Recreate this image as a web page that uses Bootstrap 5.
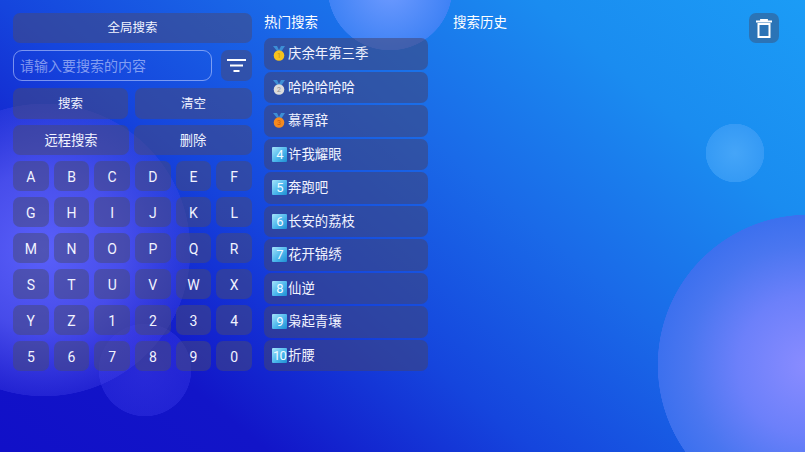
<!DOCTYPE html>
<html lang="zh">

<head>
    <meta charset="utf-8">
    <title>全局搜索</title>
    <link rel="stylesheet" href="https://cdn.jsdelivr.net/npm/bootstrap@5.3.0/dist/css/bootstrap.min.css">
    <style>
        html, body { height: 100%; }

        body {
            overflow: hidden;
            font-family: Roboto, "Noto Sans CJK SC", sans-serif;
            color: #fff;
            background:
                radial-gradient(circle at 808px 365px, #8a8cff 0, #6c80fa 70px, #4a76f0 120px, #3c70ee 150px, transparent 150.5px) 0 0 no-repeat,
                radial-gradient(circle at 735px 153px, #45a5f8 0, #359af5 29px, transparent 29.5px) 0 0 no-repeat,
                radial-gradient(circle at 390px -12px, #6f9bff 0, #3f82f5 62px, transparent 62.5px) 0 0 no-repeat,
                radial-gradient(circle at 145px 370px, rgba(75, 75, 240, .4) 0, rgba(70, 70, 240, .3) 46px, transparent 46.5px) 0 0 no-repeat,
                radial-gradient(circle at 44px 250px, #5a60fa 0, rgba(80, 85, 240, .85) 80px, rgba(75, 75, 235, .3) 146px, transparent 146.5px) 0 0 no-repeat,
                linear-gradient(40deg, #1110c8 0%, #1215c8 20%, #1545dd 40%, #1a6ae8 60%, #1a8cf0 80%, #1b9cf6 100%);
        }

        .page-wrap {
            width: 805px;
            height: 452px;
            padding: 13px 26px 0 13px;
        }

        .left-col { width: 239px; margin-right: 12px; }
        .hot-col { width: 164px; margin-right: 25px; }

        .glass-btn {
            --bs-btn-color: #f1f3ff;
            --bs-btn-hover-color: #f1f3ff;
            --bs-btn-bg: rgba(70, 72, 118, .52);
            --bs-btn-hover-bg: rgba(70, 72, 118, .52);
            --bs-btn-border-width: 0;
            --bs-btn-border-radius: 7px;
            --bs-btn-font-size: 12.5px;
            --bs-btn-padding-x: 0;
            --bs-btn-padding-y: 0;
            --bs-btn-line-height: 1;
            display: flex;
            align-items: center;
            justify-content: center;
            padding-top: 1px;
        }

        .top-btn { height: 30px; }
        .input-row { margin-top: 7px; }
        .btn-row-a {
            display: grid;
            grid-template-columns: 115px 117px;
            column-gap: 7px;
            height: 31px;
            margin-top: 7px;
        }

        .btn-row-b {
            display: grid;
            grid-template-columns: 116px 118px;
            column-gap: 5px;
            height: 30px;
            margin-top: 6px;
        }

        .btn-row-b .btn { --bs-btn-font-size: 13.3px; }

        .search-input {
            width: 199px;
            height: 31px;
            padding: 0 6px;
            font-size: 14px;
            color: #fff;
            background: transparent;
            border: 1px solid rgba(190, 205, 255, .6);
            border-radius: 9px;
        }

        .search-input::placeholder { color: rgba(205, 215, 255, .6); }

        .filter-btn { width: 31px; height: 31px; padding-top: 0; }

        .key-grid {
            display: grid;
            grid-template-columns: repeat(6, 1fr);
            grid-auto-rows: 30px;
            column-gap: 5px;
            row-gap: 6px;
            margin-top: 6px;
        }

        .key-grid .btn { --bs-btn-font-size: 14px; }

        .section-title { font-size: 13.5px; line-height: 18px; height: 18px; }

        .hot-list { margin-top: 7px; display: flex; flex-direction: column; gap: 2px; }

        .hot-item {
            height: 31.5px;
            display: flex;
            align-items: center;
            padding-left: 7px;
            font-size: 13.4px;
            line-height: 1;
            color: #f1f3ff;
            border-radius: 7px;
            background: rgba(66, 68, 115, .55);
        }

        .rank-icon { width: 16px; height: 15px; flex: none; margin-right: 1px; }

        .keycap {
            width: 15px;
            height: 15px;
            flex: none;
            margin-left: 1px;
            margin-right: 1px;
            display: flex;
            align-items: center;
            justify-content: center;
            font-size: 13px;
            letter-spacing: -.8px;
            color: #f2faff;
            background: linear-gradient(135deg, #a6e4fa, #4bb6ec 55%, #1f8fd2);
            border-radius: 1px;
        }

        .history-col { flex-grow: 1; }

        .trash-btn { width: 30px; height: 30px; background: rgba(60, 80, 120, .5); border-radius: 7px; }
    </style>
</head>

<body>
    <div class="page-wrap d-flex align-items-start">
        <!-- left: search and keyboard -->
        <div class="left-col d-flex flex-column">
            <button class="btn glass-btn top-btn w-100" type="button">全局搜索</button>
            <div class="input-row d-flex justify-content-between">
                <input class="search-input" type="text" placeholder="请输入要搜索的内容">
                <button class="btn glass-btn filter-btn" type="button" aria-label="筛选">
                    <svg width="19" height="13" viewBox="0 0 19 13">
                        <path d="M0 1h19M3 6.500h13M6.500 12h6" stroke="#fff" stroke-width="2" fill="none" />
                    </svg>
                </button>
            </div>
            <div class="btn-row-a">
                <button class="btn glass-btn" type="button">搜索</button>
                <button class="btn glass-btn" type="button">清空</button>
            </div>
            <div class="btn-row-b">
                <button class="btn glass-btn" type="button">远程搜索</button>
                <button class="btn glass-btn" type="button">删除</button>
            </div>
            <div class="key-grid" id="keys"></div>
        </div>

        <!-- middle: hot searches -->
        <div class="hot-col">
            <div class="section-title">热门搜索</div>
            <div class="hot-list" id="hotList"></div>
        </div>

        <!-- history -->
        <div class="history-col">
            <div class="section-title">搜索历史</div>
        </div>

        <button class="btn trash-btn p-0 d-flex align-items-center justify-content-center flex-shrink-0" type="button" aria-label="删除">
            <svg width="16" height="19" viewBox="0 0 16 19">
                <path d="M0 2.500h16M5 2V0.800h6V2" stroke="#fff" stroke-width="1.800" fill="none" />
                <rect x="2.500" y="5" width="11" height="13" stroke="#fff" stroke-width="2" fill="none" />
            </svg>
        </button>
    </div>

    <script src="https://cdn.jsdelivr.net/npm/bootstrap@5.3.0/dist/js/bootstrap.bundle.min.js"></script>
    <script>
        var keys = "ABCDEFGHIJKLMNOPQRSTUVWXYZ1234567890";
        var keyBox = document.getElementById("keys");
        keys.split("").forEach(function (k) {
            var b = document.createElement("button");
            b.className = "btn glass-btn";
            b.type = "button";
            b.textContent = k;
            keyBox.appendChild(b);
        });

        var medals = [
            ["#f6c21c", "#c98f08"],
            ["#dcdcdc", "#8f8f8f"],
            ["#f58a1f", "#c9560c"]
        ];
        var titles = ["庆余年第三季", "哈哈哈哈哈", "慕胥辞", "许我耀眼", "奔跑吧", "长安的荔枝", "花开锦绣", "仙逆", "枭起青壤", "折腰"];
        var list = document.getElementById("hotList");
        titles.forEach(function (t, i) {
            var row = document.createElement("div");
            row.className = "hot-item";
            if (i < 3) {
                row.innerHTML = '<svg class="rank-icon" viewBox="0 0 16 15">' +
                    '<path d="M2 0h4l2.500 5H6zM14 0h-4L7.500 5 10 6z" fill="#3d8fd6"/>' +
                    '<circle cx="8" cy="9.500" r="5.300" fill="' + medals[i][0] + '"/>' +
                    '<text x="8" y="12" font-size="7" text-anchor="middle" fill="' + medals[i][1] + '">' + (i + 1) + '</text></svg>';
            } else {
                row.innerHTML = '<span class="keycap">' + (i + 1) + '</span>';
            }
            var s = document.createElement("span");
            s.textContent = t;
            row.appendChild(s);
            list.appendChild(row);
        });
    </script>
</body>

</html>
